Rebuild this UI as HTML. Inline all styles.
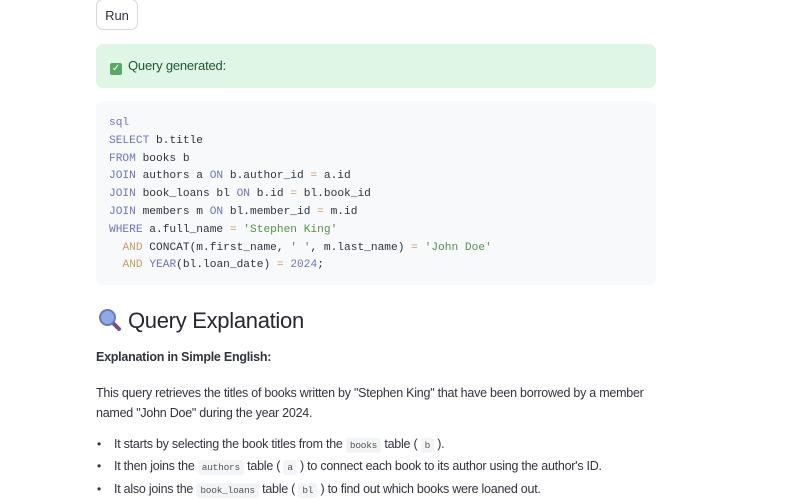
<!DOCTYPE html>
<html><head><style>
body{margin:0;width:800px;height:500px;overflow:hidden;background:#fff;font-family:"Liberation Sans",sans-serif;color:#31333f;position:relative}
.abs{position:absolute}
.btn{left:96px;top:-1px;width:42px;height:31px;border:1px solid #d6d6d9;border-radius:7px;font-size:13px;line-height:31px;text-align:center;box-sizing:border-box}
.ok{left:96px;top:44px;width:560px;height:44px;background:#dff5e5;border-radius:7px}
.ok>span{position:absolute;left:14px;top:14px;font-size:13px;color:#1f5a34;letter-spacing:-.2px}
.chk{display:inline-block;width:12px;height:12px;background:#5aa867;border-radius:2px;color:#fff;font-size:10px;line-height:12px;text-align:center;vertical-align:-1px;margin-right:6px}
.code{left:96px;top:101px;width:560px;height:184px;background:#f8f9fb;border-radius:7px}
pre{margin:0;position:absolute;left:13px;top:14px;font-family:"Liberation Mono",monospace;font-size:11.2px;line-height:17.8px;color:#31333f}
.k{color:#6f74c0}.s{color:#5a8f4e}.o{color:#c9a064}.n{color:#c9a064}
h2{margin:0;left:98px;top:308px;font-size:22px;font-weight:normal;letter-spacing:-.3px;color:#262730}
.t{font-size:12.5px;letter-spacing:-.25px;left:96px}
code{font-family:"Liberation Mono",monospace;font-size:9.5px;background:#f3f4f6;padding:2px 4px;border-radius:3px;color:#555}
.b{left:97px;font-size:12px}
</style></head><body>
<div class="abs btn">Run</div>
<div class="abs ok"><span><span class="chk">✓</span>Query generated:</span></div>
<div class="abs code"><pre><span class="k">sql</span>
<span class="k">SELECT</span> b.title
<span class="k">FROM</span> books b
<span class="k">JOIN</span> authors a <span class="k">ON</span> b.author_id <span class="o">=</span> a.id
<span class="k">JOIN</span> book_loans bl <span class="k">ON</span> b.id <span class="o">=</span> bl.book_id
<span class="k">JOIN</span> members m <span class="k">ON</span> bl.member_id <span class="o">=</span> m.id
<span class="k">WHERE</span> a.full_name <span class="o">=</span> <span class="s">'Stephen King'</span>
  <span class="n">AND</span> CONCAT(m.first_name, <span class="s">' '</span>, m.last_name) <span class="o">=</span> <span class="s">'John Doe'</span>
  <span class="n">AND</span> <span class="k">YEAR</span>(bl.loan_date) <span class="o">=</span> <span class="k">2024</span>;</pre></div>
<h2 class="abs"><svg width="24" height="24" viewBox="0 0 24 24" style="vertical-align:-4px;margin-right:6px"><line x1="14" y1="14" x2="21" y2="21" stroke="#7a4a8a" stroke-width="4" stroke-linecap="round"/><circle cx="9.5" cy="9.5" r="7.5" fill="#8fa8e8" stroke="#6a7ab8" stroke-width="2"/></svg>Query Explanation</h2>
<div class="abs t" style="top:350px;font-weight:bold">Explanation in Simple English:</div>
<div class="abs t" style="top:383px;line-height:20px;width:570px">This query retrieves the titles of books written by "Stephen King" that have been borrowed by a member named "John Doe" during the year 2024.</div>
<div class="abs b" style="top:437px">•</div><div class="abs t" style="left:114px;top:437px">It starts by selecting the book titles from the <code>books</code> table ( <code>b</code> ).</div>
<div class="abs b" style="top:459px">•</div><div class="abs t" style="left:114px;top:459px">It then joins the <code>authors</code> table ( <code>a</code> ) to connect each book to its author using the author's ID.</div>
<div class="abs b" style="top:482px">•</div><div class="abs t" style="left:114px;top:482px">It also joins the <code>book_loans</code> table ( <code>bl</code> ) to find out which books were loaned out.</div>
</body></html>
